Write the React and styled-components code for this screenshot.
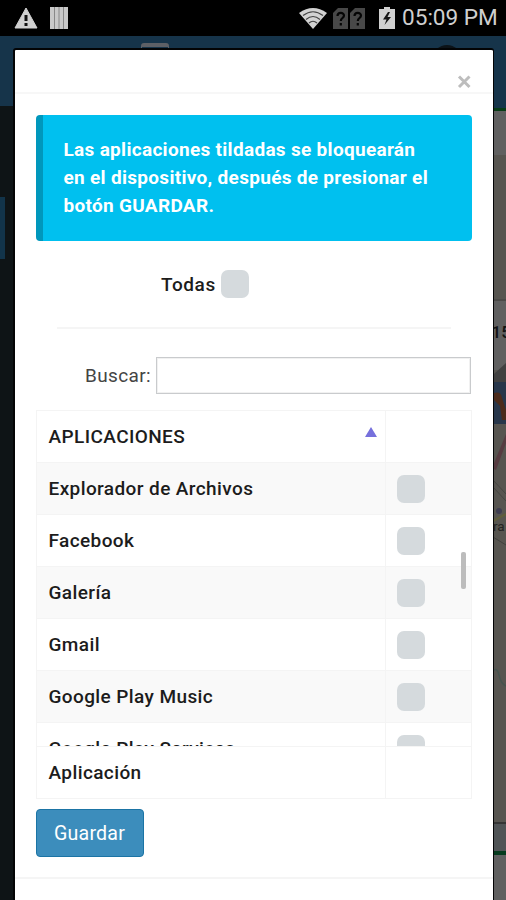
import React from "react";
import styled, { createGlobalStyle } from "styled-components";

const STATUS_HEIGHT = 36;
const ROW_HEIGHT = 52;
const border = "#f4f4f4";
const black = "#000";
const white = "#fff";

const APPS = [
  "Explorador de Archivos",
  "Facebook",
  "Galería",
  "Gmail",
  "Google Play Music",
  "Google Play Services",
];

const GlobalStyle = createGlobalStyle`
  * {
    box-sizing: border-box;
  }
  body {
    margin: 0;
    background: ${black};
    font-family: Roboto, sans-serif;
  }
`;

const Screen = styled.div`
  width: 506px;
  height: 900px;
  overflow: hidden;
  display: flex;
  flex-direction: column;
`;

const StatusBar = styled.header`
  display: flex;
  align-items: center;
  flex: none;
  height: ${STATUS_HEIGHT}px;
  padding: 0 9px 0 14px;
  background: ${black};
  color: #cfcfcf;
  font-size: 22.6px;
`;

const Clock = styled.span`
  width: 95px;
  margin-left: 7px;
  white-space: nowrap;
  line-height: 38px;
`;

const Spacer = styled.div`
  flex: 1;
`;

const Page = styled.div`
  position: relative;
  flex: 1;
  display: flex;
  flex-direction: column;
`;

const Navbar = styled.div`
  display: flex;
  flex: none;
  justify-content: space-between;
  height: 70px;
  padding: 7px 45px 0 141px;
  background: #16344a;
`;

const NavIcon = styled.div`
  width: 28px;
  height: 20px;
  border: 1px solid #5d6066;
  border-top-width: 4px;
  border-radius: 3px;
`;

const NavAvatar = styled.div`
  width: 28px;
  height: 28px;
  margin-top: 2px;
  border-radius: 50%;
  background: #0c1318;
`;

const Columns = styled.div`
  flex: 1;
  display: flex;
  justify-content: space-between;
`;

const Sidebar = styled.div`
  width: 14px;
  padding-top: 91px;
  background: #0e1416;
`;

const SidebarActive = styled.div`
  width: 5px;
  height: 62px;
  background: #12344a;
`;

const Backdrop = styled.div`
  width: 15px;
  overflow: hidden;
`;

const Modal = styled.section`
  position: absolute;
  top: 12px;
  left: 13px;
  width: 481px;
  height: 870px;
  display: flex;
  flex-direction: column;
  background: ${white};
  border: 2px solid #030405;
  border-width: 2px 1px 2px 2px;
  border-radius: 3px;
`;

const ModalHeader = styled.div`
  display: flex;
  justify-content: flex-end;
  flex: none;
  height: 44px;
  padding: 24px 21px 0 0;
  border-bottom: 2px solid #f7f7f7;
`;

const CloseButton = styled.button`
  display: flex;
  width: 16px;
  height: 16px;
  padding: 0;
  border: 0;
  background: none;
`;

const ModalBody = styled.div`
  flex: none;
  height: 785px;
  padding: 21px 21px 0 21px;
  border-bottom: 2px solid #f5f5f5;
`;

const Callout = styled.div`
  height: 126px;
  padding: 21px 22px 0 20.5px;
  border-left: 7px solid #0097bc;
  border-radius: 4px;
  background: #00c0ef;
  color: ${white};
  font-size: 19px;
  font-weight: 700;
  letter-spacing: 0.3px;
  line-height: 28px;
  white-space: nowrap;
`;

const SelectAll = styled.label`
  display: flex;
  align-items: center;
  height: 88px;
  margin: 0 21px;
  padding: 0 0 0 104px;
  border-bottom: 2px solid #f5f5f5;
  color: #1c1c1c;
  font-size: 19px;
  font-weight: 500;
  letter-spacing: 0.6px;
`;

const Checkbox = styled.span`
  flex: none;
  width: 28px;
  height: 28px;
  border-radius: 7px;
  background: #d5dadd;
`;

const SelectAllText = styled.span`
  width: 60px;
`;

const Search = styled.label`
  display: flex;
  align-items: center;
  justify-content: flex-end;
  gap: 5px;
  margin-top: 28px;
  padding-right: 1px;
  color: #444;
  font-size: 19px;
  letter-spacing: 0.35px;
`;

const SearchInput = styled.input`
  width: 315px;
  height: 37px;
  border: 1px solid #c9cbcd;
  box-shadow: inset 0 0 0 1px #f1f1f1;
  background: ${white};
  outline: none;
`;

const Table = styled.div`
  position: relative;
  margin-top: 16px;
  border: 1px solid ${border};
  color: #1c1c1c;
  font-size: 19px;
  font-weight: 500;
  letter-spacing: 0.4px;
`;

const Row = styled.div`
  display: flex;
  height: ${ROW_HEIGHT}px;
  border-bottom: 1px solid ${border};
  background: ${({ $striped }) => ($striped ? "#f9f9f9" : white)};
`;

const FooterRow = styled(Row)`
  height: 52px;
  border-top: 1px solid ${border};
  border-bottom: 0;
`;

const NameCell = styled.div`
  display: flex;
  align-items: center;
  justify-content: space-between;
  width: 349px;
  padding: 0 8px 0 11.5px;
  border-right: 1px solid ${border};
  white-space: nowrap;
`;

const CheckCell = styled.div`
  display: flex;
  align-items: center;
  padding-left: 11px;
`;

const SortArrow = styled.span`
  margin-top: -9px;
  border: 6px solid transparent;
  border-top: 0;
  border-bottom: 10px solid #7670dc;
`;

const ScrollBody = styled.div`
  height: 283px;
  overflow: hidden;
`;

const ScrollThumb = styled.div`
  position: absolute;
  top: 141px;
  right: 5px;
  width: 5px;
  height: 37px;
  border-radius: 2px;
  background: #bcbcbc;
`;

const SaveButton = styled.button`
  display: block;
  width: 108px;
  height: 48px;
  margin-top: 10px;
  padding: 0 1px 0 0;
  border: 1px solid #1b74a5;
  border-radius: 4px;
  background: #3c8dbc;
  color: ${white};
  font: 400 19.6px Roboto, sans-serif;
  letter-spacing: 0.2px;
`;

const WarningIcon = () => (
  <svg width="24" height="22" viewBox="0 0 24 22">
    <path d="M12 1 23 21H1z" fill="#d0d0d0" stroke="#d0d0d0" />
    <path d="M12 8v6M12 16v3" stroke="#111" strokeWidth="3" />
  </svg>
);

const BarsIcon = () => (
  <svg width="18" height="22" viewBox="0 0 18 22">
    <path d="M0 0h18v22H0z" fill="#c9c9c9" />
    <path d="M4.5 0v22M9 0v22M13.5 0v22" stroke="#888" />
  </svg>
);

const WifiIcon = () => (
  <svg width="28" height="21" viewBox="0 0 28 21">
    <path d="M0 5Q14-5 28 5L14 21z" fill="#d2d2d2" />
    <path
      d="M4 7.500Q14 0 24 7.500M7 11.500Q14 5.500 21 11.500M10 15Q14 11.500 18 15"
      fill="none"
      stroke="#444"
      strokeWidth="1.200"
    />
  </svg>
);

const SimIcon = () => (
  <svg width="15" height="21" viewBox="0 0 15 21">
    <path d="M5 0h10v21H0V5z" fill="#484848" />
    <path
      d="M4.500 8c0-4 6.500-4 6.500-.5 0 2.500-3.200 2.500-3.200 5.500M7.800 15v2.500"
      fill="none"
      stroke="#050505"
      strokeWidth="2.200"
    />
  </svg>
);

const BatteryIcon = () => (
  <svg width="16" height="22" viewBox="0 0 16 22">
    <path d="M5 0h6v2h5v20H0V2h5z" fill="#d0d0d0" />
    <path d="M9 5 4 12.500h3.500L5.500 18l6.500-8H8.500L11 5z" fill="#151515" />
  </svg>
);

const Icons = styled.div`
  display: flex;
  align-items: center;
  gap: ${({ $gap = 0 }) => $gap}px;
  margin-right: ${({ $after = 0 }) => $after}px;
`;

// Strip of the dimmed dashboard that stays visible beside the dialog
const Dashboard = () => (
  <svg width="15" height="794" viewBox="491 106 15 794">
    <path d="M491 106h15v794h-15z" fill="#575550" />
    <path d="M491 106h15v2h-15z" fill="#16344a" />
    <path d="M491 108h15v3h-15z" fill="#083c16" />
    <path d="M491 111h15v44h-15z" fill="#606060" />
    <path d="M491 300h15v70h-15z" fill="#606060" />
    <path d="M491 299h15v2h-15z" fill="#4b4a48" />
    <text x="491.500" y="338" fontSize="17" fontWeight="500" fill="#121212">
      15
    </text>
    <path d="m494 374 12-11v20h-12z" fill="#414141" />
    <path d="M491 382h15v42h-15z" fill="#28374b" />
    <path d="M494 393q7-2 8 5l4 12v10h-4l-2-14-6-6z" fill="#4c2c1c" />
    <path d="m492 468 14-34v9l-10 27z" fill="#573c41" />
    <path d="m493 480 13 14m-13-7 13 14" stroke="#454541" />
    <circle cx="499" cy="511" r="3" fill="#3e3d50" />
    <path d="m493 521 13-7" stroke="#605e3b" strokeWidth="2" />
    <text x="493" y="531" fontSize="13.500" fill="#242422">
      ra
    </text>
    <path d="m493 537 13 8" stroke="#41413e" />
    <path
      d="M492 672q5-6 7 3t7 11"
      fill="none"
      stroke="#46544f"
      strokeWidth="1.500"
    />
    <path d="M491 823h15v28h-15z" fill="#505456" />
    <path d="M491 822h15v2h-15z" fill="#353535" />
    <path d="M491 851h15v4h-15z" fill="#063b1e" />
    <path d="M491 855h15v45h-15z" fill="#606060" />
  </svg>
);

const AppRow = ({ name, striped }) => (
  <Row $striped={striped}>
    <NameCell>{name}</NameCell>
    <CheckCell>
      <Checkbox />
    </CheckCell>
  </Row>
);

const App = () => (
  <>
    <GlobalStyle />
    <Screen>
      <StatusBar>
        <Icons $gap={12}>
          <WarningIcon />
          <BarsIcon />
        </Icons>
        <Spacer />
        <Icons $after={6}>
          <WifiIcon />
        </Icons>
        <Icons $gap={2} $after={14}>
          <SimIcon />
          <SimIcon />
        </Icons>
        <BatteryIcon />
        <Clock>05:09 PM</Clock>
      </StatusBar>
      <Page>
        <Navbar>
          <NavIcon />
          <NavAvatar />
        </Navbar>
        <Columns>
          <Sidebar>
            <SidebarActive />
          </Sidebar>
          <Backdrop>
            <Dashboard />
          </Backdrop>
        </Columns>
        <Modal>
          <ModalHeader>
            <CloseButton aria-label="Cerrar">
              <svg width="16" height="16" viewBox="0 0 16 16">
                <path
                  d="m3 2.500 10.500 10.500M13.500 2.500 3 13"
                  stroke="#bdbdbd"
                  strokeWidth="3"
                />
              </svg>
            </CloseButton>
          </ModalHeader>
          <ModalBody>
            <Callout>
              Las aplicaciones tildadas se bloquearán
              <br />
              en el dispositivo, después de presionar el
              <br />
              botón GUARDAR.
            </Callout>
            <SelectAll>
              <SelectAllText>Todas</SelectAllText>
              <Checkbox />
            </SelectAll>
            <Search>
              Buscar:
              <SearchInput />
            </Search>
            <Table>
              <Row>
                <NameCell>
                  APLICACIONES
                  <SortArrow />
                </NameCell>
              </Row>
              <ScrollBody>
                {APPS.map((name, i) => (
                  <AppRow key={name} name={name} striped={i % 2 === 0} />
                ))}
              </ScrollBody>
              <FooterRow>
                <NameCell>Aplicación</NameCell>
              </FooterRow>
              <ScrollThumb />
            </Table>
            <SaveButton>Guardar</SaveButton>
          </ModalBody>
        </Modal>
      </Page>
    </Screen>
  </>
);

export default App;
